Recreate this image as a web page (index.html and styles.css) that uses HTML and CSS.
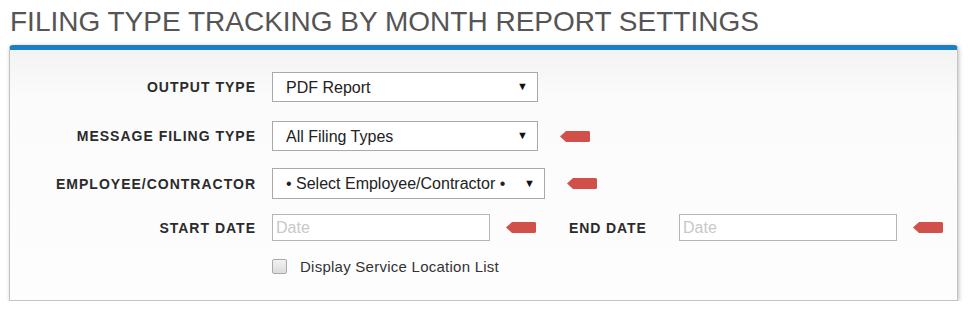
FILE: index.html
```html
<!DOCTYPE html>
<html lang="en">
<head>
  <meta charset="UTF-8"/>
  <title>Filing Type Tracking By Month Report Settings</title>
  <link rel="stylesheet" href="styles.css">
</head>
<body>
  <h1 class="page-title">FILING TYPE TRACKING BY MONTH REPORT SETTINGS</h1>

  <div class="panel">
    <!-- Output type -->
    <div class="form-row row-1">
      <label class="field-label" for="output-type">OUTPUT TYPE</label>
      <div class="select-wrap w-266">
        <select id="output-type"><option>PDF Report</option></select>
        <span class="caret">&#9660;</span>
      </div>
    </div>

    <!-- Filing type -->
    <div class="form-row row-2">
      <label class="field-label" for="filing-type">MESSAGE FILING TYPE</label>
      <div class="select-wrap w-266">
        <select id="filing-type"><option>All Filing Types</option></select>
        <span class="caret">&#9660;</span>
      </div>
      <svg class="req-tag" viewBox="0 0 30 11"><polygon points="0,5.5 6,0 29,0 30,1 30,10 29,11 6,11"/></svg>
    </div>

    <!-- Employee -->
    <div class="form-row row-3">
      <label class="field-label" for="employee">EMPLOYEE/CONTRACTOR</label>
      <div class="select-wrap w-273">
        <select id="employee"><option>&bull; Select Employee/Contractor &bull;</option></select>
        <span class="caret">&#9660;</span>
      </div>
      <svg class="req-tag" viewBox="0 0 30 11"><polygon points="0,5.5 6,0 29,0 30,1 30,10 29,11 6,11"/></svg>
    </div>

    <!-- Dates -->
    <div class="form-row date-row">
      <label class="field-label" for="start-date">START DATE</label>
      <input type="text" id="start-date" class="date-input" placeholder="Date"/>
      <svg class="req-tag" viewBox="0 0 30 11"><polygon points="0,5.5 6,0 29,0 30,1 30,10 29,11 6,11"/></svg>
      <label class="field-label end-label" for="end-date">END DATE</label>
      <input type="text" id="end-date" class="date-input" placeholder="Date"/>
      <svg class="req-tag" viewBox="0 0 30 11"><polygon points="0,5.5 6,0 29,0 30,1 30,10 29,11 6,11"/></svg>
    </div>

    <div class="check-row">
      <input type="checkbox" id="show-locations"/>
      <label for="show-locations">Display Service Location List</label>
    </div>
  </div>
</body>
</html>
```

FILE: styles.css
```css
body{
  margin: 0;
  padding: 0;
  background: #ffffff;
  font-family: "Liberation Sans", Arial, sans-serif;
}
.page-title{
  margin: 0;
  padding: 6px 0 0 10px;
  height: 39px;
  font-size: 28px;
  font-weight: normal;
  color: #555;
  line-height: 32px;
}
.panel{
  box-sizing: border-box;
  margin: 0 0 0 9px;
  width: 949px;
  height: 256px;
  background: linear-gradient(#f3f3f3, #fbfbfb 45px, #fdfdfd);
  border: 1px solid #c4c4c4;
  border-top: 5px solid #1a7fc5;
  border-radius: 4px 4px 0 0;
  box-shadow: 1px 1px 4px rgba(0, 0, 0, 0.25);
  padding-top: 22px;
}
.form-row{
  display: flex;
  align-items: center;
}
.row-1{ height: 30px; margin-bottom: 19px; }
.row-2{ height: 30px; margin-bottom: 17px; }
.row-3{ height: 31px; margin-bottom: 15px; }
.field-label{
  width: 246px;
  text-align: right;
  margin-right: 16px;
  font-size: 14px;
  font-weight: bold;
  letter-spacing: 1px;
  color: #2b2b2b;
  flex-shrink: 0;
}
.select-wrap{
  position: relative;
  height: 100%;
}
.w-266{ width: 266px; }
.w-273{ width: 273px; }
.select-wrap select{
  -webkit-appearance: none;
  appearance: none;
  width: 100%;
  height: 100%;
  border: 1px solid #a9a9a9;
  border-radius: 0;
  background: #fff;
  font-family: "Liberation Sans", Arial, sans-serif;
  font-size: 16px;
  color: #222;
  padding: 0 0 0 13px;
}
.caret{
  position: absolute;
  right: 10px;
  top: 50%;
  margin-top: -7px;
  font-size: 11px;
  color: #111;
  pointer-events: none;
}
.req-tag{
  width: 30px;
  height: 11px;
  margin-left: 22px;
  fill: #d1504a;
}
.date-row{
  height: 27px;
  margin-bottom: 17px;
}
.date-input{
  width: 218px;
  height: 27px;
  box-sizing: border-box;
  border: 1px solid #b5b5b5;
  background: #fff;
  font-family: "Liberation Sans", Arial, sans-serif;
  font-size: 16px;
  padding: 0 3px;
}
.date-input::placeholder{
  color: #c8c8c8;
}
.date-row .req-tag{
  margin-left: 16px;
}
.end-label{
  width: 78px;
  text-align: left;
  margin-left: 33px;
  margin-right: 32px;
  letter-spacing: 0.9px;
}
.check-row{
  display: flex;
  align-items: center;
  padding-left: 262px;
}
.check-row input{
  margin: 0;
  width: 15px;
  height: 15px;
  -webkit-appearance: none;
  appearance: none;
  border: 1px solid #aaa;
  border-radius: 2px;
  background: linear-gradient(#f2f2f2, #dcdcdc);
}
.check-row label{
  margin-left: 13px;
  font-size: 15px;
  letter-spacing: 0.25px;
  color: #333;
}
```
